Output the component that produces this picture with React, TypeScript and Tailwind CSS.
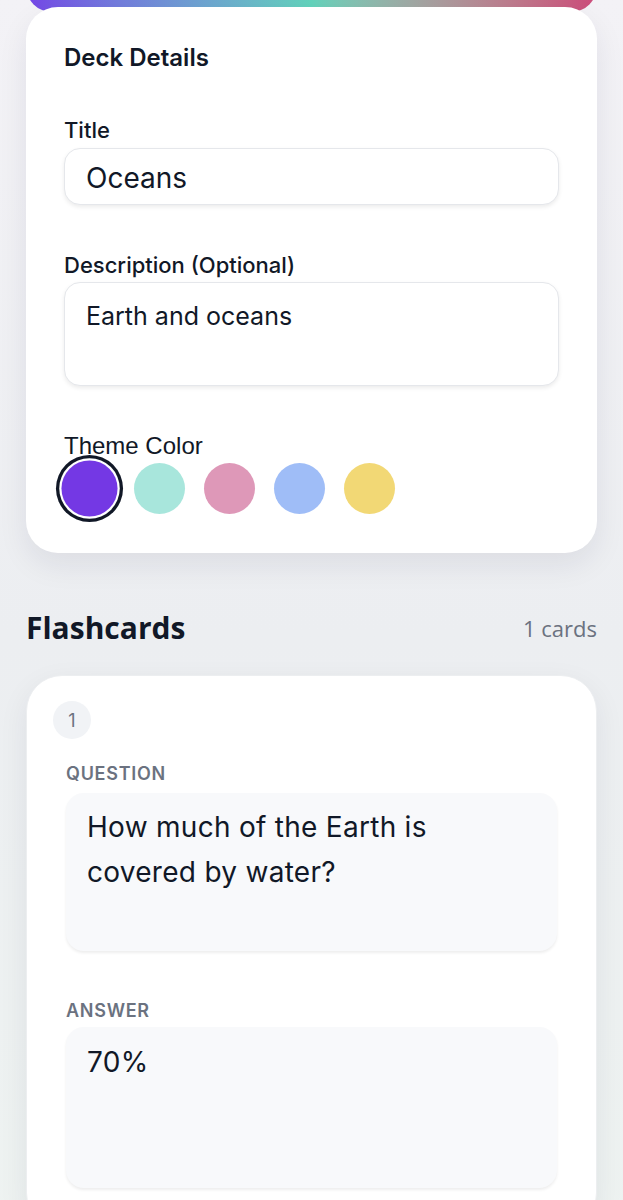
import React from "react";

const inter = { fontFamily: "Inter, 'Noto Sans', sans-serif" };
const open = { fontFamily: "'Open Sans', 'Noto Sans', sans-serif" };

export default function App() {
  const colors = ["#7438e4", "#a8e6dc", "#de98b8", "#9fbdf7", "#f2d875"];
  return (
    <div
      className="min-h-[1200px] w-full bg-gradient-to-b from-[#f3f2f6] via-[#eceef1] to-[#eef3f1] px-[26px] pb-10"
      style={inter}
    >
      {/* Deck details card */}
      <div className="relative pt-[7px]">
        <div className="absolute left-0 right-0 top-[-40px] h-[52px] rounded-[32px] bg-gradient-to-r from-[#7445e6] via-[#62d3bc] to-[#cc4a7a]" />
        <div className="relative rounded-[32px] bg-white px-[38px] pb-[39px] pt-[37px] shadow-[0_12px_30px_rgba(30,30,60,0.08)]">
          <h2 className="h-[28px] text-[24px] font-semibold leading-[28px] text-[#111827]">
            Deck Details
          </h2>
          <div className="mt-[45px] flex flex-col gap-[47px]">
            <div>
              <div className="mb-[5px] text-[22px] font-medium leading-[26px] text-[#111827]">Title</div>
              <div className="flex h-[57px] items-center rounded-[16px] border border-[#e5e7eb] bg-white px-[21px] pt-[2px] text-[28px] text-[#111827] shadow-[0_2px_4px_rgba(0,0,0,0.08)]">
                Oceans
              </div>
            </div>
            <div>
              <div className="mb-[4px] text-[22px] font-medium leading-[26px] text-[#111827]">
                Description (Optional)
              </div>
              <div className="h-[104px] rounded-[16px] border border-[#e5e7eb] bg-white px-[21px] pt-[17px] text-[25px] leading-[32px] text-[#111827] shadow-[0_2px_4px_rgba(0,0,0,0.08)]">
                Earth and oceans
              </div>
            </div>
            <div>
              <div
                className="text-[24px] leading-[26px] text-[#111827]"
                style={{ fontFamily: "'Liberation Sans', Arial, sans-serif" }}
              >
                Theme Color
              </div>
              <div className="mt-[4px] flex items-center gap-[19px]">
                {colors.map((c, i) => (
                  <div
                    key={c}
                    className={
                      i === 0
                        ? "h-[51px] w-[51px] scale-110 rounded-full ring-[3px] ring-[#111827] ring-offset-2 ring-offset-white"
                        : "h-[51px] w-[51px] rounded-full"
                    }
                    style={{ backgroundColor: c }}
                  />
                ))}
              </div>
            </div>
          </div>
        </div>
      </div>

      {/* Flashcards header */}
      <div className="mt-[57px] flex items-center justify-between">
        <h2 className="text-[30px] font-bold leading-[36px] text-[#111827]" style={open}>
          Flashcards
        </h2>
        <span className="text-[22px] leading-[28px] text-[#6b7280]" style={open}>
          1 cards
        </span>
      </div>

      {/* Flashcard */}
      <div className="relative mt-[29px] rounded-[36px] border border-[#eceef0] bg-white px-[39px] pb-[40px] pt-[88px] shadow-[0_10px_30px_rgba(30,30,60,0.07)]">
        <div className="absolute left-[26px] top-[25px] flex h-[38px] w-[38px] items-center justify-center rounded-full bg-[#f1f3f6] text-[18px] text-[#6b7280]">
          1
        </div>
        <div className="mb-[9px] text-[18px] font-semibold uppercase leading-[20px] tracking-[0.04em] text-[#6b7280]">
          Question
        </div>
        <div className="h-[158px] rounded-[18px] bg-[#f8f9fb] px-[21px] pt-[12px] text-[28px] leading-[45px] tracking-[0.01em] text-[#111827] shadow-[0_2px_3px_rgba(0,0,0,0.07)]">
          How much of the Earth is
          <br />
          covered by water?
        </div>
        <div className="mb-[6px] mt-[50px] text-[18px] font-semibold uppercase leading-[20px] tracking-[0.04em] text-[#6b7280]">
          Answer
        </div>
        <div className="h-[161px] rounded-[18px] bg-[#f8f9fb] px-[21px] pt-[13px] text-[28px] leading-[45px] tracking-[0.01em] text-[#111827] shadow-[0_2px_3px_rgba(0,0,0,0.07)]">
          70%
        </div>
      </div>
    </div>
  );
}
